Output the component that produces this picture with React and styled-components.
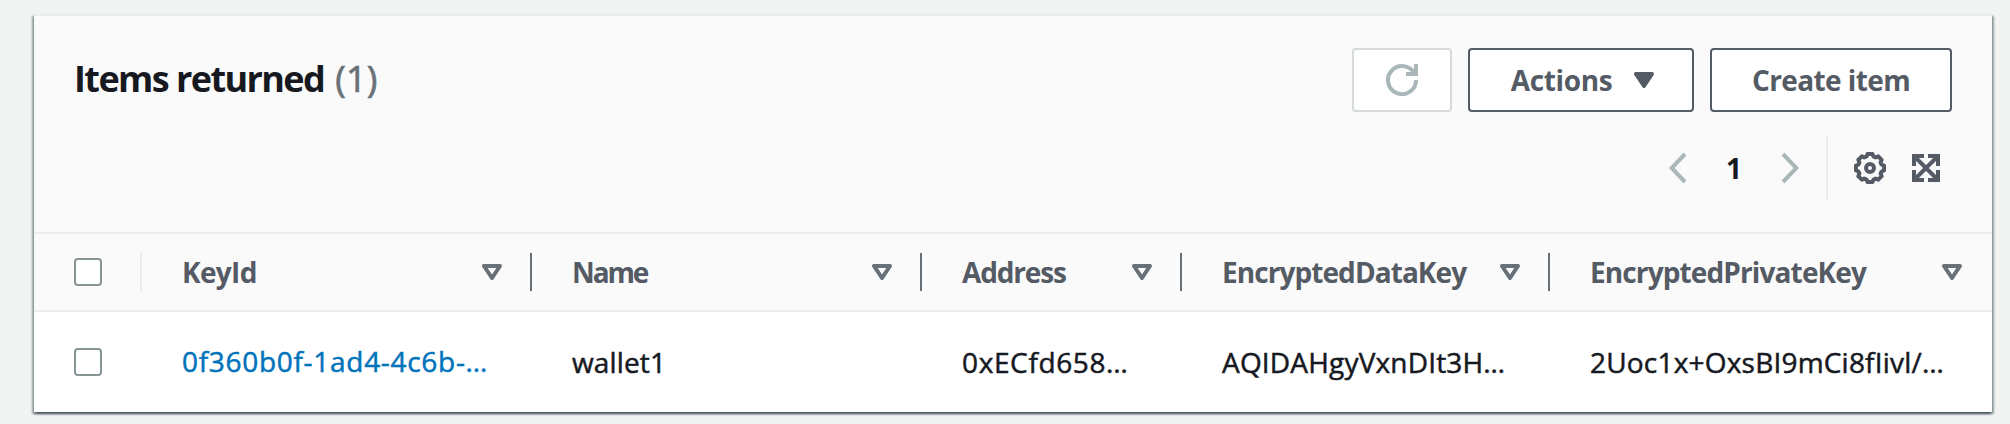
import React from 'react';
import styled, { createGlobalStyle, css } from 'styled-components';

const GlobalStyle = createGlobalStyle`
  * { box-sizing: border-box; }
  body {
    margin: 0;
    background: #f2f4f4;
    color: #16191f;
    font-family: "Open Sans", "Noto Sans", sans-serif;
    font-size: 28px;
    line-height: 44px;
  }
`;

const Page = styled.main`
  height: 424px;
  padding: 14px 18px 0 34px;
  overflow: hidden;
`;

const Panel = styled.section`
  width: 1958px;
  height: 398px;
  border-top: 2px solid #eaeded;
  background: #fff;
  box-shadow:
    0 2px 2px 0 rgba(0, 28, 36, 0.3),
    2px 2px 2px 0 rgba(0, 28, 36, 0.36),
    -2px 2px 2px 0 rgba(0, 28, 36, 0.36);
`;

const PanelHeader = styled.header`
  height: 218px;
  padding: 32px 40px 0;
  background: #fafafa;
  border-bottom: 2px solid #eaeded;
`;

const TitleBar = styled.div`
  display: flex;
  justify-content: space-between;
  align-items: flex-start;
`;

const Title = styled.h1`
  display: flex;
  gap: 11px;
  margin: 5px 0 0;
  font-size: 36px;
  line-height: 52px;
  font-weight: 700;
  letter-spacing: -1.58px;
`;

const Counter = styled.span`
  color: #687078;
  font-weight: 400;
  letter-spacing: 0.2px;
  -webkit-text-stroke: 0.7px;
`;

const ButtonGroup = styled.div`
  display: flex;
  gap: 16px;
`;

const Button = styled.button`
  display: flex;
  align-items: center;
  justify-content: center;
  gap: 22px;
  width: ${(p) => p.$width}px;
  height: 64px;
  padding: 0 0 0 ${(p) => p.$inset || 0}px;
  border: 2px solid #545b64;
  border-radius: 4px;
  background: #fff;
  color: #545b64;
  font: inherit;
  font-weight: 700;
  letter-spacing: ${(p) => p.$tracking || 0}px;
  ${(p) =>
    p.disabled &&
    css`
      border-color: #d5dbdb;
      color: #aab7b8;
    `}
`;

const ToolRow = styled.div`
  display: flex;
  align-items: center;
  justify-content: flex-end;
  height: 64px;
  margin-top: 24px;
  padding-right: 12px;
`;

const Pagination = styled.nav`
  display: flex;
  align-items: center;
  justify-content: space-between;
  width: 130px;
  margin-right: 27px;
  color: #aab7b8;
`;

const PageNumber = styled.span`
  color: #16191f;
  font-weight: 700;
`;

const Preferences = styled.div`
  display: flex;
  align-items: center;
  gap: 26px;
  height: 64px;
  padding-left: 26px;
  border-left: 2px solid #eaeded;
  color: #545b64;
`;

const Row = styled.div`
  display: grid;
  grid-template-columns: 108px 390px 390px 260px 368px 442px;
  align-items: center;
  height: ${(p) => (p.$header ? 78 : 100)}px;
  background: ${(p) => (p.$header ? '#fafafa' : '#fff')};
  border-bottom: ${(p) => (p.$header ? '2px solid #eaeded' : '0')};
`;

const SelectCell = styled.div`
  display: flex;
  align-items: center;
  height: 38px;
  padding-left: 40px;
  border-right: ${(p) => (p.$divided ? '2px solid #eaeded' : '0')};
`;

const Checkbox = styled.span`
  width: 28px;
  height: 28px;
  border: 2px solid #879596;
  border-radius: 4px;
  background: #fff;
`;

const HeaderCell = styled.div`
  display: flex;
  align-items: center;
  justify-content: space-between;
  height: 38px;
  padding: 0 ${(p) => (p.$last ? 30 : 28)}px 0 40px;
  border-right: ${(p) => (p.$last ? '0' : '2px solid #687078')};
  color: #687078;
`;

const HeaderLabel = styled.span`
  color: #545b64;
  font-weight: 700;
  letter-spacing: ${(p) => p.$tracking}px;
`;

const Cell = styled.div`
  padding-left: 40px;
  white-space: nowrap;
  letter-spacing: ${(p) => p.$tracking}px;
  -webkit-text-stroke: 0.5px;
`;

const KeyLink = styled.span`
  position: relative;
  top: -1px;
  color: #0073bb;
`;

const Icon = styled.svg`
  display: block;
  flex: none;
  fill: none;
  stroke: currentColor;
  stroke-width: 4;
`;

const RefreshIcon = () => (
  <Icon width="32" height="32" viewBox="0 0 32 32">
    <path d="M20 10h10V0" />
    <path d="M30 16A14 14 0 1 1 28.6 10" />
  </Icon>
);

const TriangleIcon = ({ filled }) => (
  <Icon width="20" height="16" viewBox="0 0 20 16">
    <path d="M2 2H18L10 14Z" strokeLinejoin="round" fill={filled ? 'currentColor' : 'none'} />
  </Icon>
);

const ChevronIcon = ({ right }) => (
  <Icon width="18" height="32" viewBox="0 0 18 32">
    <path d={right ? 'M2 2L15.3 16L2 30' : 'M16 2L2.7 16L16 30'} />
  </Icon>
);

const gearPoints = Array.from({ length: 8 }, (_, k) =>
  [[-10, 14.3], [10, 14.3], [17, 12], [28, 12]].map(([deg, r]) => {
    const a = ((k * 45 + deg - 90) * Math.PI) / 180;
    return `${(16 + r * Math.cos(a)).toFixed(2)},${(16 + r * Math.sin(a)).toFixed(2)}`;
  })
)
  .flat()
  .join(' ');

const GearIcon = () => (
  <Icon width="32" height="32" viewBox="0 0 32 32">
    <polygon points={gearPoints} strokeLinejoin="round" />
    <circle cx="16" cy="16" r="4" />
  </Icon>
);

const ExpandIcon = () => (
  <Icon width="28" height="28" viewBox="0 0 28 28">
    <path d="M2 12V2H12M16 2H26V12M26 16V26H16M12 26H2V16M2 2L26 26M26 2L2 26" />
  </Icon>
);

const columns = [
  { label: 'KeyId', tracking: -0.65, value: '0f360b0f-1ad4-4c6b-…', valueTracking: 0.7, link: true },
  { label: 'Name', tracking: -2.1, value: 'wallet1', valueTracking: 0.15 },
  { label: 'Address', tracking: -1.15, value: '0xECfd658…', valueTracking: 0.63 },
  { label: 'EncryptedDataKey', tracking: -0.93, value: 'AQIDAHgyVxnDIt3H…', valueTracking: 0.18 },
  { label: 'EncryptedPrivateKey', tracking: -0.88, value: '2Uoc1x+OxsBI9mCi8fIivl/…', valueTracking: 0.2 },
];

export default function App() {
  return (
    <Page>
      <GlobalStyle />
      <Panel>
        <PanelHeader>
          <TitleBar>
            <Title>
              Items returned <Counter>(1)</Counter>
            </Title>
            <ButtonGroup>
              <Button $width={100} disabled aria-label="Refresh">
                <RefreshIcon />
              </Button>
              <Button $width={226} $tracking={-0.36} $inset={3}>
                Actions
                <TriangleIcon filled />
              </Button>
              <Button $width={242} $tracking={-0.6}>
                Create item
              </Button>
            </ButtonGroup>
          </TitleBar>
          <ToolRow>
            <Pagination>
              <ChevronIcon />
              <PageNumber>1</PageNumber>
              <ChevronIcon right />
            </Pagination>
            <Preferences>
              <GearIcon />
              <ExpandIcon />
            </Preferences>
          </ToolRow>
        </PanelHeader>
        <Row $header>
          <SelectCell $divided>
            <Checkbox />
          </SelectCell>
          {columns.map((c, i) => (
            <HeaderCell key={c.label} $last={i === columns.length - 1}>
              <HeaderLabel $tracking={c.tracking}>{c.label}</HeaderLabel>
              <TriangleIcon />
            </HeaderCell>
          ))}
        </Row>
        <Row>
          <SelectCell>
            <Checkbox />
          </SelectCell>
          {columns.map((c) => (
            <Cell key={c.label} $tracking={c.valueTracking}>
              {c.link ? <KeyLink>{c.value}</KeyLink> : c.value}
            </Cell>
          ))}
        </Row>
      </Panel>
    </Page>
  );
}
